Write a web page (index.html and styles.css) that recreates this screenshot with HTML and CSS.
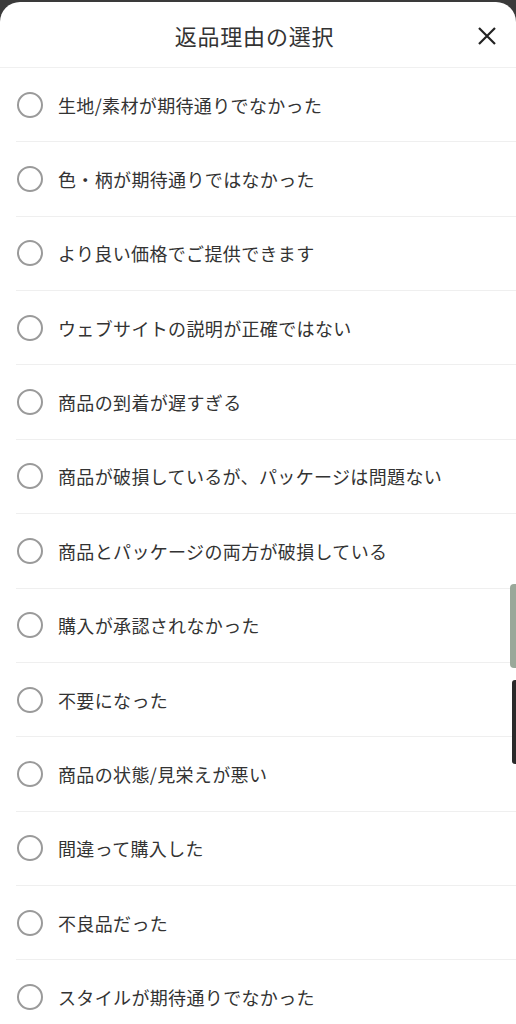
FILE: index.html
```html
<!DOCTYPE html>
<html lang="ja">
<head>
<meta charset="utf-8">
<link rel="stylesheet" href="styles.css">
</head>
<body>
<div class="sheet">
  <div class="header">
    <div class="title">返品理由の選択</div>
    <svg class="close" width="20" height="20" viewBox="0 0 20 20"><path d="M2 2 L18 18 M18 2 L2 18" stroke="#222" stroke-width="2.2" fill="none"/></svg>
  </div>
  <div class="list">
    <div class="item"><span class="radio"></span><span class="label">生地/素材が期待通りでなかった</span></div>
    <div class="item"><span class="radio"></span><span class="label">色・柄が期待通りではなかった</span></div>
    <div class="item"><span class="radio"></span><span class="label">より良い価格でご提供できます</span></div>
    <div class="item"><span class="radio"></span><span class="label">ウェブサイトの説明が正確ではない</span></div>
    <div class="item"><span class="radio"></span><span class="label">商品の到着が遅すぎる</span></div>
    <div class="item"><span class="radio"></span><span class="label">商品が破損しているが、パッケージは問題ない</span></div>
    <div class="item"><span class="radio"></span><span class="label">商品とパッケージの両方が破損している</span></div>
    <div class="item"><span class="radio"></span><span class="label">購入が承認されなかった</span></div>
    <div class="item"><span class="radio"></span><span class="label">不要になった</span></div>
    <div class="item"><span class="radio"></span><span class="label">商品の状態/見栄えが悪い</span></div>
    <div class="item"><span class="radio"></span><span class="label">間違って購入した</span></div>
    <div class="item"><span class="radio"></span><span class="label">不良品だった</span></div>
    <div class="item"><span class="radio"></span><span class="label">スタイルが期待通りでなかった</span></div>
  </div>
  <div class="scroll-a"></div>
  <div class="scroll-b"></div>
</div>
</body>
</html>
```
FILE: styles.css
```css
html, body {
  margin: 0;
  padding: 0;
  background: #3a3a3a;
  overflow: hidden;
  height: 1024px;
}
body {
  font-family: "Noto Sans CJK JP", "Noto Sans", sans-serif;
  color: #333;
}
.sheet {
  position: relative;
  margin-top: 2px;
  background: #fff;
  border-radius: 20px 20px 0 0;
  height: 1022px;
  overflow: hidden;
}
.header {
  height: 65px;
  border-bottom: 1px solid #f0f0f0;
  display: flex;
  align-items: center;
  justify-content: center;
  position: relative;
}
.title {
  font-size: 22px;
  letter-spacing: 0.8px;
  color: #333;
  margin-right: 7px;
}
.close {
  position: absolute;
  right: 19px;
  top: 24px;
}
.list {
  padding-left: 16px;
}
.item {
  height: 73.36px;
  border-bottom: 1px solid #efefef;
  display: flex;
  align-items: center;
}
.radio {
  width: 22px;
  height: 22px;
  border: 2px solid #9a9a9a;
  border-radius: 50%;
  box-sizing: content-box;
  margin-left: 1px;
  flex: none;
}
.label {
  margin-left: 15px;
  font-size: 18px;
  letter-spacing: 0.35px;
  color: #333;
}
.scroll-a {
  position: absolute;
  right: 0;
  top: 582px;
  width: 6px;
  height: 84px;
  background: #9aa89a;
  border-radius: 4px 0 0 4px;
}
.scroll-b {
  position: absolute;
  right: 0;
  top: 678px;
  width: 4px;
  height: 84px;
  background: #2a2a2a;
  border-radius: 3px 0 0 3px;
}
```
